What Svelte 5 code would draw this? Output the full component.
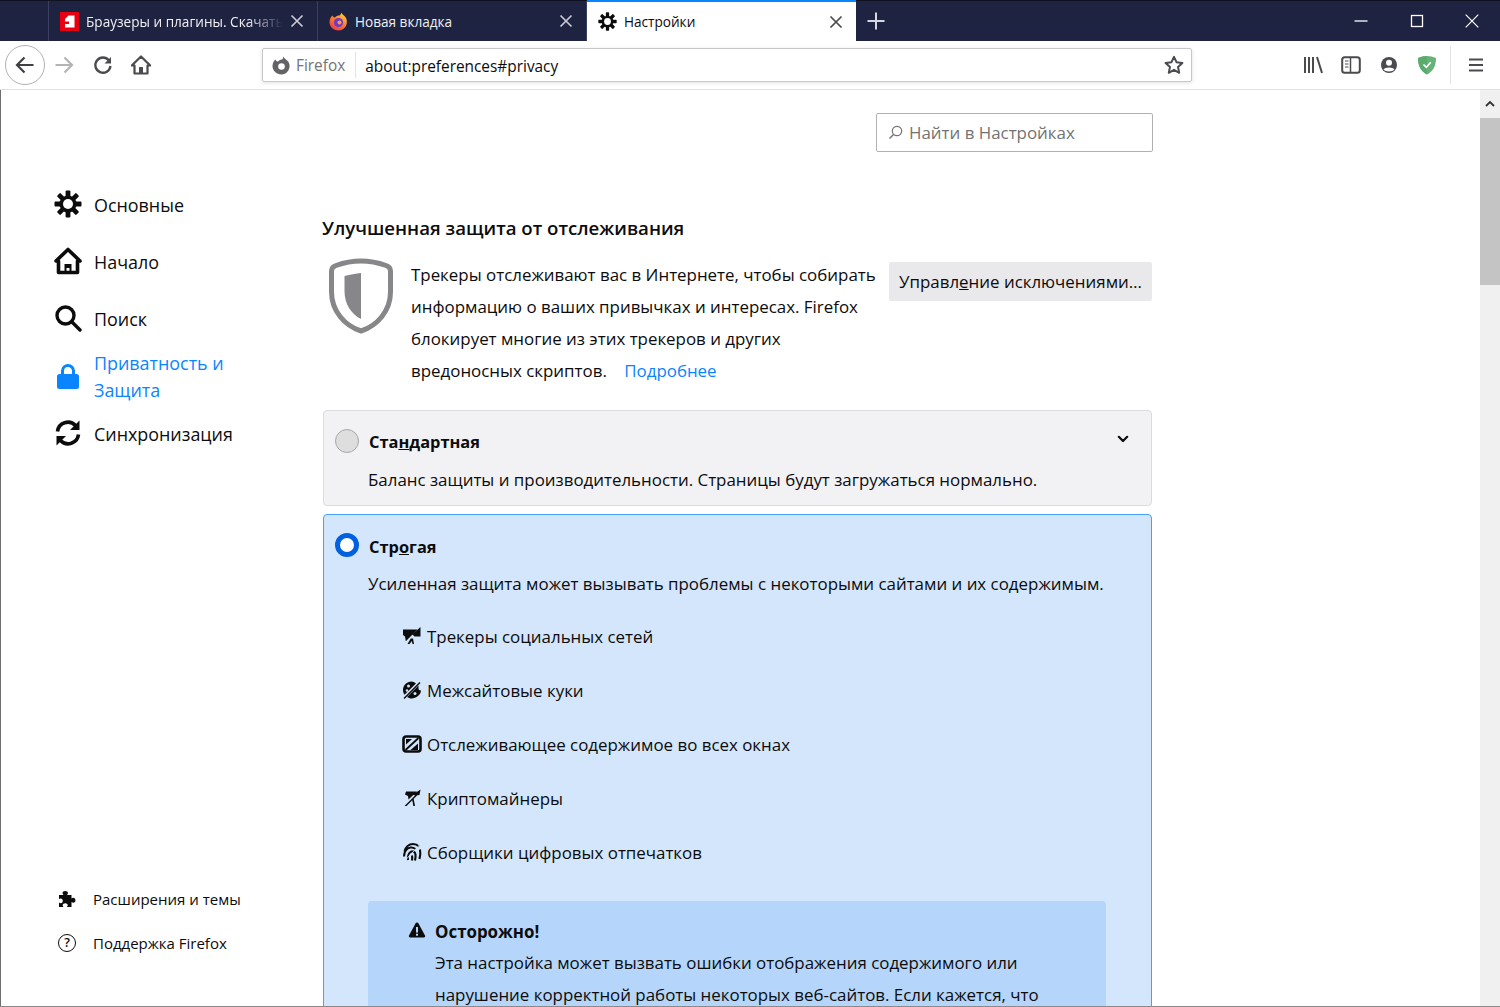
<script>
  let nav = [
    { id: 'general', label: 'Основные' },
    { id: 'home', label: 'Начало' },
    { id: 'search', label: 'Поиск' },
    { id: 'privacy', label: 'Приватность и Защита', active: true },
    { id: 'sync', label: 'Синхронизация' }
  ]
  let blocked = [
    { id: 'social', label: 'Трекеры социальных сетей' },
    { id: 'cookie', label: 'Межсайтовые куки' },
    { id: 'content', label: 'Отслеживающее содержимое во всех окнах' },
    { id: 'miner', label: 'Криптомайнеры' },
    { id: 'finger', label: 'Сборщики цифровых отпечатков' }
  ]
</script>

{#snippet gear(size)}
  <svg width={size} height={size} viewBox="0 0 28 28">
    <g fill="#0c0c0d">
      {#each [0, 45, 90, 135] as a}
        <rect x="11.600" y="0.500" width="4.800" height="27" rx="1" transform="rotate({a} 14 14)" />
      {/each}
    </g>
    <circle cx="14" cy="14" r="8.600" fill="#0c0c0d" />
    <circle cx="14" cy="14" r="5" fill="#fff" />
  </svg>
{/snippet}

<div class="window">
  <header class="tabbar">
    <div class="tab-spacer"></div>
    <div class="tab">
      <svg class="favicon" width="19" height="19" viewBox="0 0 19 19">
        <rect width="19" height="19" fill="#e60012" />
        <path d="M8.500 3.500H14.500V15.500H5V12H9V9.500H5V7Z" fill="#fff" />
      </svg>
      <span class="tab-title fade">Браузеры и плагины. Скачать</span>
      <svg class="tab-close" width="14" height="14" viewBox="0 0 14 14"><path d="M1.500 1.500 12.500 12.500M12.500 1.500 1.500 12.500" stroke="#c9cad3" stroke-width="1.700" /></svg>
    </div>
    <div class="tab">
      <svg class="favicon" width="19" height="19" viewBox="0 0 19 19">
        <defs>
          <linearGradient id="fx" x1="0.8" y1="0" x2="0.2" y2="1">
            <stop offset="0" stop-color="#ffd43b" />
            <stop offset="0.5" stop-color="#ff7a2b" />
            <stop offset="1" stop-color="#e8364f" />
          </linearGradient>
        </defs>
        <path d="M12 0.500C13 2.500 15.500 3.500 17 6C19.500 11 16.500 18.500 9.500 18.500C4 18.500 0.500 14.500 0.500 10C0.500 7.500 1.500 5 3.500 3.500C4 5 5 5.500 6 5.500C7 4 9 3.500 10.500 3.500C11.500 3 12.300 2 12 0.500Z" fill="url(#fx)" />
        <circle cx="9.500" cy="10.500" r="4.600" fill="#6e3bc2" />
        <circle cx="10.500" cy="10.500" r="2" fill="#ff9a3c" />
      </svg>
      <span class="tab-title">Новая вкладка</span>
      <svg class="tab-close" width="14" height="14" viewBox="0 0 14 14"><path d="M1.500 1.500 12.500 12.500M12.500 1.500 1.500 12.500" stroke="#c9cad3" stroke-width="1.700" /></svg>
    </div>
    <div class="tab selected">
      <span class="favicon">{@render gear(19)}</span>
      <span class="tab-title">Настройки</span>
      <svg class="tab-close" width="14" height="14" viewBox="0 0 14 14"><path d="M1.500 1.500 12.500 12.500M12.500 1.500 1.500 12.500" stroke="#4a4a4f" stroke-width="1.700" /></svg>
    </div>
    <button class="newtab" aria-label="Новая вкладка">
      <svg width="18" height="18" viewBox="0 0 18 18"><path d="M9 0.500V17.500M0.500 9H17.500" stroke="#d7d8df" stroke-width="2" /></svg>
    </button>
    <div class="win-controls">
      <svg width="14" height="14" viewBox="0 0 14 14"><path d="M0.500 7H13.500" stroke="#fff" stroke-width="1.300" /></svg>
      <svg width="14" height="14" viewBox="0 0 14 14"><rect x="1.500" y="1.500" width="11" height="11" fill="none" stroke="#fff" stroke-width="1.300" /></svg>
      <svg width="14" height="14" viewBox="0 0 14 14"><path d="M0.700 0.700 13.300 13.300M13.300 0.700 0.700 13.300" stroke="#fff" stroke-width="1.200" /></svg>
    </div>
  </header>

  <div class="toolbar">
    <div class="back">
      <svg width="20" height="20" viewBox="0 0 20 20"><path d="M18.500 10H2M9.500 2.500 2 10 9.500 17.500" fill="none" stroke="#3f3f44" stroke-width="2.200" /></svg>
    </div>
    <div class="tool forward">
      <svg width="20" height="20" viewBox="0 0 20 20"><path d="M1.500 10H18M10.500 2.500 18 10 10.500 17.500" fill="none" stroke="#b4b4b7" stroke-width="2.200" /></svg>
    </div>
    <div class="tool">
      <svg width="20" height="20" viewBox="0 0 20 20"><path d="M16 5.500A7.600 7.600 0 1 0 17.500 11" fill="none" stroke="#4a4a4f" stroke-width="2.300" /><path d="M18 2V8.500H11.500Z" fill="#4a4a4f" /></svg>
    </div>
    <div class="tool">
      <svg width="20" height="20" viewBox="0 0 20 20"><path d="M10 1.500 19.200 10.500H16.500V18.500H3.500V10.500H0.800Z" fill="none" stroke="#4a4a4f" stroke-width="2.200" stroke-linejoin="round" /><rect x="8" y="12" width="4" height="6" rx="0.500" fill="#4a4a4f" /></svg>
    </div>

    <div class="urlbar">
      <svg class="identity" width="19" height="19" viewBox="0 0 19 19">
        <path d="M11 0.500C12 2.500 14.500 3.500 16.500 6C19.500 11 16 18.500 9.500 18.500C4.500 18.500 0.500 14.500 0.500 10C0.500 7.500 1.500 5 3.500 3.500C4 5 5 5.500 6 5.500C7.500 4 9.500 3.500 10.500 3.300C11 2.500 11.200 1.500 11 0.500Z" fill="#636366" />
        <circle cx="9.500" cy="10.500" r="3.300" fill="#fff" />
      </svg>
      <span class="identity-label">Firefox</span>
      <span class="url">about:preferences#privacy</span>
      <svg class="star" width="20" height="20" viewBox="0 0 20 20"><path d="M10 1.800 12.500 7.200 18.400 7.900 14 11.900 15.200 17.800 10 14.800 4.800 17.800 6 11.900 1.600 7.900 7.500 7.200Z" fill="none" stroke="#4a4a4f" stroke-width="2" stroke-linejoin="round" /></svg>
    </div>

    <div class="tool-right">
      <div class="tool">
        <svg width="20" height="20" viewBox="0 0 20 20"><path d="M2 2V18M6 2V18M10 2V18M14 2 19 18" fill="none" stroke="#4a4a4f" stroke-width="2" /></svg>
      </div>
      <div class="tool">
        <svg width="20" height="20" viewBox="0 0 20 20"><rect x="1.200" y="2.200" width="17.600" height="15.600" rx="2.500" fill="none" stroke="#4a4a4f" stroke-width="2" /><path d="M9.500 2.500V17.500" stroke="#4a4a4f" stroke-width="1.500" /><path d="M4 6H7.500M4 9H7.500M4 12H7.500" stroke="#4a4a4f" stroke-width="1.200" /></svg>
      </div>
      <div class="tool">
        <svg width="20" height="20" viewBox="0 0 20 20"><circle cx="10" cy="10" r="8" fill="#4a4a4f" /><circle cx="10" cy="7.800" r="3" fill="#fff" /><path d="M4.500 14.500C6 11.800 14 11.800 15.500 14.500C13.500 17 6.500 17 4.500 14.500Z" fill="#fff" /></svg>
      </div>
      <div class="tool">
        <svg width="20" height="20" viewBox="0 0 20 20"><path d="M10 1C13 1 16 1.800 19 3C19 11 16 16.500 10 19.500C4 16.500 1 11 1 3C4 1.800 7 1 10 1Z" fill="#67b279" /><path d="M10 1V19.500C4 16.500 1 11 1 3C4 1.800 7 1 10 1Z" fill="#5cab6e" /><path d="M6.500 9.500 9.300 12.300 13.800 7.300" fill="none" stroke="#fff" stroke-width="1.700" /></svg>
      </div>
      <div class="tool-divider"></div>
      <div class="tool menu">
        <svg width="16" height="16" viewBox="0 0 16 16"><path d="M1 2.500H15M1 8H15M1 13.500H15" stroke="#4a4a4f" stroke-width="2" /></svg>
      </div>
    </div>
  </div>

  <div class="page">
    <aside class="sidebar">
      <nav class="categories">
        {#each nav as item}
          <div class="category" class:active={item.active}>
            <span class="cat-icon">
              {#if item.id === 'general'}
                {@render gear(28)}
              {:else if item.id === 'home'}
                <svg width="28" height="28" viewBox="0 0 28 28"><path d="M14 2.500 26 14H23.500V25.500H4.500V14H2Z" fill="none" stroke="#0c0c0d" stroke-width="3.600" stroke-linejoin="round" /><path d="M10.500 26V17H17.500V26H15.500V21H12.500V26Z" fill="#0c0c0d" /></svg>
              {:else if item.id === 'search'}
                <svg width="28" height="28" viewBox="0 0 28 28"><circle cx="11.500" cy="11.500" r="8.500" fill="none" stroke="#0c0c0d" stroke-width="3.400" /><path d="M18 18 26 26" stroke="#0c0c0d" stroke-width="3.400" stroke-linecap="round" /></svg>
              {:else if item.id === 'privacy'}
                <svg width="28" height="28" viewBox="0 0 28 28"><path d="M8.500 13V9A5.500 5.500 0 0 1 19.500 9V13" fill="none" stroke="#0a84ff" stroke-width="3" /><rect x="3" y="12" width="22" height="15" rx="2.500" fill="#0a84ff" /></svg>
              {:else}
                <svg width="28" height="28" viewBox="0 0 28 28"><path d="M3.500 12.500A10.500 10.500 0 0 1 21.500 6.500" fill="none" stroke="#0c0c0d" stroke-width="3.600" /><path d="M25.500 1.500V11H16Z" fill="#0c0c0d" /><path d="M24.500 15.500A10.500 10.500 0 0 1 6.500 21.500" fill="none" stroke="#0c0c0d" stroke-width="3.600" /><path d="M2.500 26.500V17H12Z" fill="#0c0c0d" /></svg>
              {/if}
            </span>
            <span class="cat-label">{item.label}</span>
          </div>
        {/each}
      </nav>
      <div class="side-footer">
        <div class="foot-link">
          <svg width="20" height="20" viewBox="0 0 20 20"><path d="M2 6H6.500C6 5.500 5.500 4.800 5.500 4C5.500 2.800 6.800 2 8.200 2C9.600 2 11 2.800 11 4C11 4.800 10.400 5.500 10 6H14.500V9.500C15 9 15.600 8.700 16.300 8.700C17.600 8.700 18.500 10 18.500 11.300C18.500 12.600 17.600 13.800 16.300 13.800C15.600 13.800 15 13.500 14.500 13V18H10C10.500 17.300 10.700 16.800 10.700 16.200C10.700 15 9.500 14.300 8.200 14.300C7 14.300 5.700 15 5.700 16.200C5.700 16.800 6 17.300 6.500 18H2V13.500C2.700 14 3.200 14.200 3.800 14.200C5 14.200 5.800 13 5.800 11.800C5.800 10.500 5 9.400 3.800 9.400C3.200 9.400 2.600 9.700 2 10.100Z" fill="#0c0c0d" /></svg>
          <span>Расширения и темы</span>
        </div>
        <div class="foot-link">
          <span class="help">?</span>
          <span>Поддержка Firefox</span>
        </div>
      </div>
    </aside>

    <main class="content">
      <div class="search-row">
        <div class="search">
          <svg width="15" height="15" viewBox="0 0 15 15"><circle cx="9" cy="6" r="4.700" fill="none" stroke="#737373" stroke-width="1.200" /><path d="M5.500 9.500 1.500 13.500" stroke="#737373" stroke-width="1.400" /></svg>
          <span>Найти в Настройках</span>
        </div>
      </div>

      <h2>Улучшенная защита от отслеживания</h2>

      <div class="intro">
        <svg class="shield" width="64" height="76" viewBox="0 0 64 76">
          <path d="M32 3C40 3 50 5 57 7.500C60 8.500 61.500 10 61.500 13V34C61.500 53 48 68 32 73C16 68 2.500 53 2.500 34V13C2.500 10 4 8.500 7 7.500C14 5 24 3 32 3Z" fill="none" stroke="#87878a" stroke-width="5" />
          <path d="M32 15V61C22 56 15.500 46 15.500 33V18C21 16.500 27 15.500 32 15Z" fill="#87878a" />
        </svg>
        <p>Трекеры отслеживают вас в Интернете, чтобы собирать информацию о ваших привычках и интересах. Firefox блокирует многие из этих трекеров и других вредоносных скриптов. <a href="#more">Подробнее</a></p>
        <button class="manage">Управл<u>е</u>ние исключениями…</button>
      </div>

      <section class="card">
        <div class="card-head">
          <span class="radio"></span>
          <strong>Ста<u>н</u>дартная</strong>
          <svg class="chevron" width="12" height="12" viewBox="0 0 12 12"><path d="M1.800 3.800 6 8 10.200 3.800" fill="none" stroke="#0c0c0d" stroke-width="2.200" stroke-linecap="round" stroke-linejoin="round" /></svg>
        </div>
        <p class="card-desc">Баланс защиты и производительности. Страницы будут загружаться нормально.</p>
      </section>

      <section class="card strict">
        <div class="card-head">
          <span class="radio on"></span>
          <strong>Стр<u>о</u>гая</strong>
        </div>
        <p class="card-desc">Усиленная защита может вызывать проблемы с некоторыми сайтами и их содержимым.</p>

        <ul class="blocked">
          {#each blocked as row}
            <li>
              <svg width="20" height="20" viewBox="0 0 20 20" fill="#0c0c0d">
                {#if row.id === 'social'}
                  <path d="M1 3.500H15.500L3.800 15.200 3 10.500 1 9ZM18.500 1V10.500H12.500L10.500 8.500ZM8.800 12.500H11L12 18H10.500L9.800 15 7.500 18H5.500Z" />
                {:else if row.id === 'cookie'}
                  <path d="M9.500 1.500C4.800 1.500 1 5.300 1 10C1 11.800 1.600 13.500 2.500 14.800L14 3.500C12.500 2.200 11 1.500 9.500 1.500ZM16.500 5.500 5 17C6.300 17.900 8 18.500 9.500 18.500C14.200 18.500 19 14.500 19 10.500C17.500 10.500 16.500 9.500 16.500 8.500Z" />
                  <path d="M2 18.500 18 2.500" stroke="#0c0c0d" stroke-width="1.500" />
                  <circle cx="6.500" cy="6" r="1.500" fill="#d3e6fb" /><circle cx="5" cy="10.500" r="1.200" fill="#d3e6fb" /><circle cx="13" cy="13.500" r="1.500" fill="#d3e6fb" />
                {:else if row.id === 'content'}
                  <rect x="1.500" y="2.500" width="17" height="15" rx="2.500" fill="none" stroke="#0c0c0d" stroke-width="2.600" />
                  <path d="M3.500 16 16.500 4" stroke="#0c0c0d" stroke-width="1.800" />
                  <path d="M8.500 16 16 9.500V16Z" /><path d="M4 5H10L4 10.500Z" />
                {:else if row.id === 'miner'}
                  <path d="M4 3.500H15L6.500 11.500 6 8 3 6.500ZM18.500 1.500 17.500 7 13 7.500 11 6.500ZM10 10.500 11.500 10 13 18H11.300ZM2.500 18 16 4.500 17 5.500 4.500 18Z" />
                {:else}
                  <path d="M2.500 9.500C3.500 5 7 2 11 2C13.500 2 15.500 3 17 4.500M2 14.500C2 10 4.500 6 8.500 5.500C10.500 5.300 12 5.800 13.500 7M6 18C5.500 14.500 6.500 10.500 9.500 9.500C11.500 9 13 10 13.500 12.500C13.800 14.500 13.500 16.500 13 18.500M10 18.500C10.300 16.500 10.300 15 10 13.500M18 7.500C18.500 10 18.500 13.500 17.500 17" fill="none" stroke="#0c0c0d" stroke-width="2.100" />
                  <path d="M3 18.500 17.500 3" stroke="#d3e6fb" stroke-width="1" />
                {/if}
              </svg>
              <span>{row.label}</span>
            </li>
          {/each}
        </ul>

        <div class="warning">
          <div class="warn-title">
            <svg width="18" height="18" viewBox="0 0 18 18"><path d="M9 1.500C9.700 1.500 10.200 1.900 10.500 2.400L17 14.500C17.500 15.500 16.800 16.500 15.800 16.500H2.200C1.200 16.500 0.500 15.500 1 14.500L7.500 2.400C7.800 1.900 8.300 1.500 9 1.500Z" fill="#0c0c0d" /><rect x="8" y="6" width="2" height="5.500" fill="#b5d6fa" /><rect x="8" y="12.700" width="2" height="2" fill="#b5d6fa" /></svg>
            <strong>Осторожно!</strong>
          </div>
          <p>Эта настройка может вызвать ошибки отображения содержимого или нарушение корректной работы некоторых веб-сайтов. Если кажется, что</p>
        </div>
      </section>
    </main>

    <div class="scrollbar">
      <div class="scroll-btn">
        <svg width="10" height="8" viewBox="0 0 10 8"><path d="M1 6 5 2 9 6" fill="none" stroke="#333" stroke-width="1.800" /></svg>
      </div>
      <div class="scroll-thumb"></div>
    </div>
  </div>
</div>

<style>
  :global(body) {
    margin: 0;
    overflow: hidden;
    background: #fff;
  }
  .window {
    width: 1500px;
    height: 1007px;
    box-sizing: border-box;
    display: flex;
    flex-direction: column;
    overflow: hidden;
    font-family: "Open Sans", "Noto Sans", sans-serif;
    color: #0c0c0d;
    border-bottom: 1px solid #8a8a8a;
  }

  /* title bar */
  .tabbar {
    height: 41px;
    flex: none;
    box-sizing: border-box;
    border-top: 1px solid #10121f;
    background: #1f2342;
    display: flex;
    align-items: stretch;
    color: #f0f0f4;
    font-size: 13.600px;
  }
  .tab-spacer {
    width: 48px;
    border-right: 1px solid #3c4060;
  }
  .tab {
    width: 269px;
    display: flex;
    align-items: center;
    padding: 0 13px 0 11px;
    box-sizing: border-box;
    gap: 7px;
    border-right: 1px solid #3c4060;
  }
  .tab.selected {
    width: 269px;
    background: #fff;
    color: #0c0c0d;
    border-top: 2px solid #0a84ff;
    border-right: none;
    margin-top: -1px;
  }
  .favicon {
    flex: none;
    display: flex;
  }
  .tab-title {
    flex: 1;
    white-space: nowrap;
    overflow: hidden;
  }
  .fade {
    -webkit-mask-image: linear-gradient(to right, #000 82%, transparent);
    mask-image: linear-gradient(to right, #000 82%, transparent);
  }
  .tab-close {
    flex: none;
  }
  .newtab {
    width: 40px;
    padding: 0;
    border: none;
    background: none;
    display: flex;
    align-items: center;
    justify-content: center;
  }
  .win-controls {
    margin-left: auto;
    width: 146px;
    padding-right: 21px;
    box-sizing: border-box;
    display: flex;
    align-items: center;
    justify-content: space-between;
  }

  /* toolbar */
  .toolbar {
    height: 49px;
    flex: none;
    box-sizing: border-box;
    display: flex;
    align-items: center;
    background: #fff;
    border-bottom: 1px solid #e1e1e2;
    padding-left: 5px;
    color: #4a4a4f;
  }
  .back {
    width: 38px;
    height: 38px;
    flex: none;
    border: 1px solid #b1b1b3;
    border-radius: 50%;
    display: flex;
    align-items: center;
    justify-content: center;
  }
  .tool {
    width: 38px;
    height: 38px;
    flex: none;
    display: flex;
    align-items: center;
    justify-content: center;
  }
  .forward {
    margin-right: 1px;
  }
  .urlbar {
    width: 930px;
    height: 34px;
    flex: none;
    margin-left: 102px;
    box-sizing: border-box;
    border: 1px solid #c8c8ca;
    border-radius: 2px;
    box-shadow: 0 1px 4px rgba(0, 0, 0, 0.12);
    display: flex;
    align-items: center;
    padding: 0 7px 0 9px;
    font-size: 15.400px;
  }
  .identity {
    flex: none;
  }
  .identity-label {
    margin-left: 5px;
    padding: 2px 10px 0 0;
    border-right: 1px solid #e3e3e4;
    color: #737373;
    line-height: 24px;
  }
  .url {
    margin-left: 9px;
    color: #0c0c0d;
    flex: 1;
    padding-top: 2px;
  }
  .tool-right {
    margin-left: auto;
    display: flex;
    align-items: center;
    padding-right: 6px;
  }
  .tool-divider {
    width: 1px;
    height: 38px;
    background: #e3e3e4;
    margin: 0 6px 0 4px;
  }
  .menu {
    width: 37px;
  }

  /* page */
  .page {
    flex: 1;
    min-height: 0;
    display: flex;
    border-left: 1px solid #6e6e70;
  }
  .sidebar {
    width: 321px;
    flex: none;
    box-sizing: border-box;
    padding: 87px 0 52px 53px;
    display: flex;
    flex-direction: column;
    justify-content: space-between;
  }
  .categories {
    display: flex;
    flex-direction: column;
  }
  .category {
    display: flex;
    align-items: center;
    gap: 12px;
    width: 200px;
    min-height: 57px;
    font-size: 17.900px;
    line-height: 27px;
  }
  .category.active {
    color: #0a84ff;
    min-height: 58px;
  }
  .cat-icon {
    width: 28px;
    height: 28px;
    flex: none;
    display: flex;
    margin-top: -3px;
  }
  .category.active .cat-label {
    width: 150px;
  }
  .side-footer {
    display: flex;
    flex-direction: column;
    gap: 22px;
    padding-left: 3px;
    font-size: 15px;
  }
  .foot-link {
    display: flex;
    align-items: center;
    gap: 16px;
    height: 22px;
  }
  .help {
    width: 18px;
    height: 18px;
    margin: -1px 1px 0;
    box-sizing: border-box;
    border: 1.500px solid #0c0c0d;
    border-radius: 50%;
    font-size: 12.500px;
    line-height: 15px;
    text-align: center;
    font-weight: 600;
  }

  .content {
    width: 830px;
    flex: none;
    display: flex;
    flex-direction: column;
    font-size: 16.900px;
  }
  .search-row {
    display: flex;
    justify-content: flex-end;
    padding-top: 23px;
    margin-right: -1px;
  }
  .search {
    width: 277px;
    height: 39px;
    box-sizing: border-box;
    border: 1px solid #b1b1b3;
    border-radius: 2px;
    display: flex;
    align-items: center;
    gap: 6px;
    padding-left: 11px;
    color: #737373;
  }
  h2 {
    margin: 60px 0 0;
    font-size: 18.640px;
    font-weight: 600;
    line-height: 32px;
  }
  .intro {
    display: flex;
    align-items: flex-start;
    height: 128px;
    padding-top: 14px;
    padding-left: 7px;
  }
  .shield {
    flex: none;
    margin-right: 18px;
  }
  .intro p {
    margin: 1px 0 0;
    width: 478px;
    line-height: 32px;
    flex: none;
  }
  .intro a {
    color: #0a84ff;
    text-decoration: none;
    margin-left: 13px;
  }
  .manage {
    width: 263px;
    height: 39px;
    flex: none;
    margin: 4px 0 0 0;
    border: none;
    border-radius: 2px;
    background: #e9e9eb;
    font: inherit;
    color: #0c0c0d;
    padding: 0;
  }

  .card {
    margin: 24px 0 0 1px;
    box-sizing: border-box;
    width: 829px;
    border: 1px solid #dcdcde;
    border-radius: 4px;
    background: #f2f2f4;
    padding: 12px 0 0 11px;
    height: 96px;
    flex: none;
  }
  .card + .card {
    margin-top: 8px;
  }
  .card-head {
    display: flex;
    align-items: center;
    gap: 10px;
    height: 36px;
    width: 772px;
    position: relative;
  }
  .card-head strong {
    font-size: 16.400px;
    font-weight: 700;
  }
  .chevron {
    position: absolute;
    right: -22px;
    top: 10px;
  }
  .radio {
    width: 24px;
    height: 24px;
    flex: none;
    box-sizing: border-box;
    border: 1px solid #a8a8aa;
    border-radius: 50%;
    background: #dededf;
  }
  .radio.on {
    border: 5px solid #0060df;
    background: #fff;
  }
  .card-desc {
    margin: 5px 0 0 33px;
    line-height: 32px;
    white-space: nowrap;
  }
  .strict {
    height: auto;
    border-color: #45a1ff;
    background: #d3e6fb;
    padding-bottom: 80px;
  }
  .strict strong {
    margin-top: 2px;
  }
  .blocked {
    list-style: none;
    margin: 9px 0 0 67px;
    padding: 0;
  }
  .blocked li {
    display: flex;
    align-items: center;
    gap: 5px;
    height: 54px;
  }
  .warning {
    margin: 22px 0 0 33px;
    width: 738px;
    box-sizing: border-box;
    border-radius: 4px;
    background: #b5d6fa;
    padding: 12px 40px 40px 40px;
  }
  .warn-title {
    display: flex;
    align-items: center;
    gap: 9px;
    height: 34px;
  }
  .warning p {
    margin: 0 0 0 27px;
    line-height: 32px;
  }

  .scrollbar {
    width: 20px;
    margin-left: auto;
    flex: none;
    background: #f0f0f0;
    display: flex;
    flex-direction: column;
  }
  .scroll-btn {
    height: 28px;
    display: flex;
    align-items: center;
    justify-content: center;
  }
  .scroll-thumb {
    height: 167px;
    background: #c4c4c4;
  }
</style>
